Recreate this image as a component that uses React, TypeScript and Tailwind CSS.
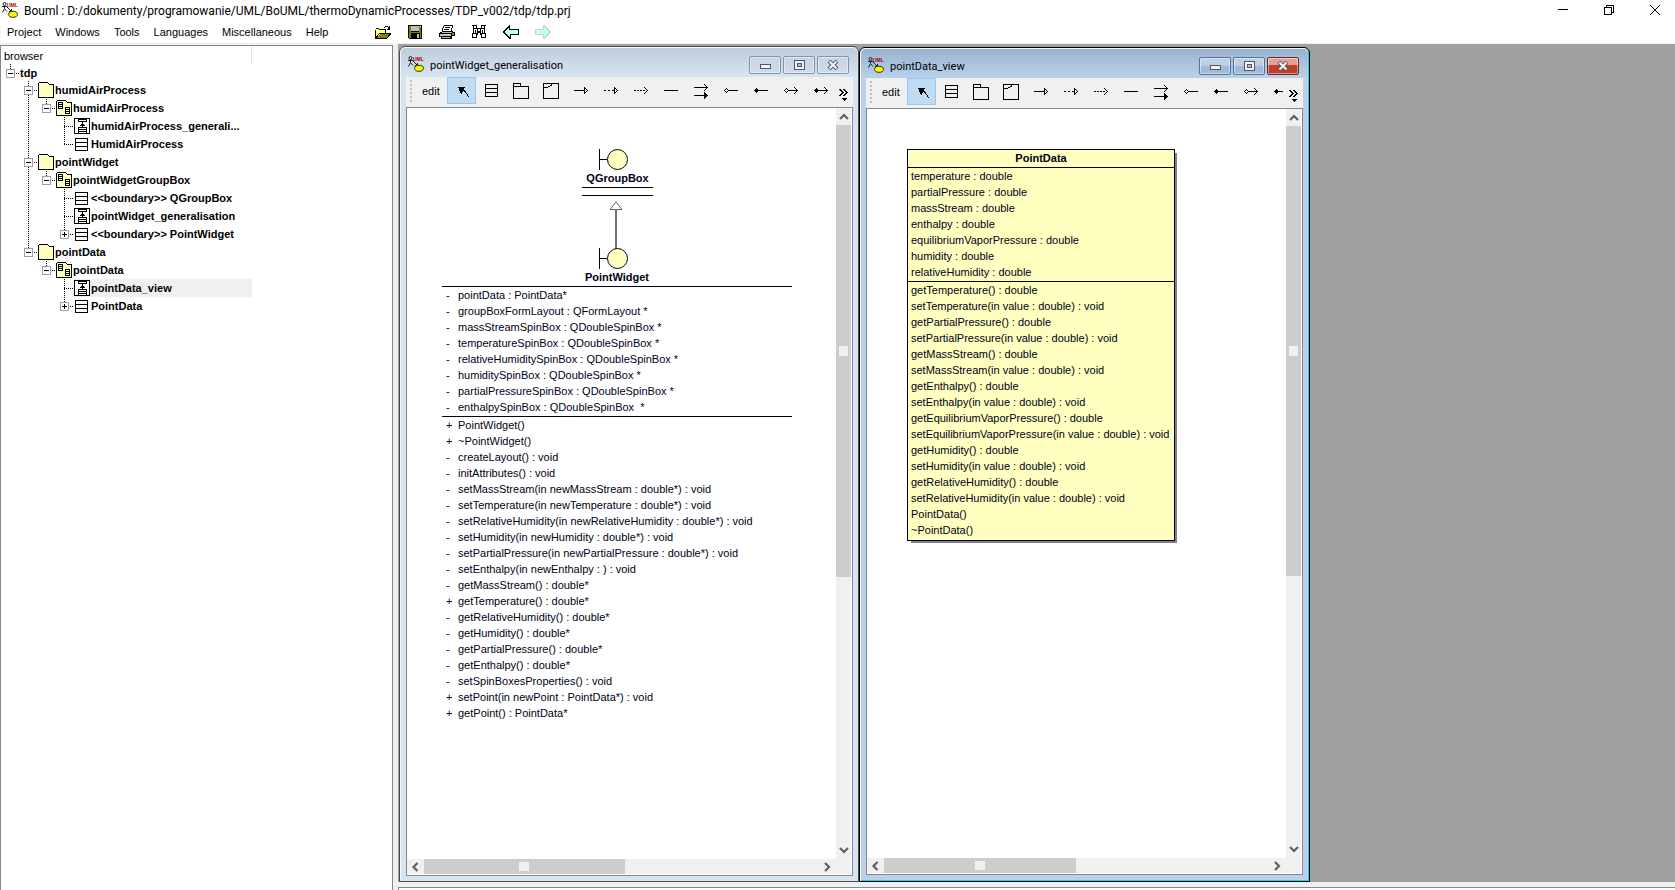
import React from "react";

const ui = "font-['Liberation_Sans',Arial,sans-serif]";

/* ---------- drawings ---------- */

function Svg({ w, h, children, smooth = false }: { w: number; h: number; children: React.ReactNode; smooth?: boolean }) {
  return (
    <svg
      width={w}
      height={h}
      viewBox={`0 0 ${w} ${h}`}
      fill="none"
      stroke="none"
      shapeRendering={smooth ? "auto" : "crispEdges"}
      className="block shrink-0"
      aria-hidden="true"
    >
      {children}
    </svg>
  );
}

function AppLogo() {
  return (
    <Svg w={16} h={16} smooth>
      <circle cx="2.5" cy="2" r="1.5" stroke="#222" />
      <path d="M0 4.5H5.5M2.5 3.5V6.5L0.5 10.5M2.5 6.5L5 9.5M5 5L9 9" stroke="#222" />
      <path d="M9.5 7V9.5H7" stroke="#222" />
      <text x="5" y="4.6" fontSize="5" fontWeight="700" fontFamily="Liberation Sans, sans-serif" fill="#a00000">UML</text>
      <ellipse cx="11" cy="12.3" rx="4.4" ry="3" fill="#ffff00" stroke="#333300" />
    </Svg>
  );
}

function OpenIcon() {
  return (
    <Svg w={16} h={14}>
      <path d="M0 5h1v-1h3v1h5v3h-4v1h-1v1h-1v1h-1v1h-1v1h-1z" fill="#ffff80" />
      <path d="M4 8.500H15.500M0.500 13V4.500M1 3.500H4M4 4.500H10.500V8M0 13.500H12" stroke="#000" />
      <path d="M5 9h10l-3 4H1z" fill="#808000" />
      <path d="M4 9l-3 4M15.500 9l-3.500 4" stroke="#000" />
      <path d="M9 2.500h1M10 1.500h3M13 2.500h1M14.500 1v3M12 4.500h3M13 3.500h2" stroke="#000" />
    </Svg>
  );
}

function SaveIcon() {
  return (
    <Svg w={14} h={14}>
      <path d="M0 0h14v14H1l-1-1z" fill="#000" />
      <path d="M1 1h12v12H1z" fill="#808000" />
      <path d="M3 0h8v7H3z" fill="#000" />
      <path d="M3 1h8v5H3z" fill="#c0c0c0" />
      <path d="M3 8h9v6H3z" fill="#000" />
      <path d="M9 9h2v4H9z" fill="#c0c0c0" />
      <path d="M12 1h1v1h-1z" fill="#fff" />
    </Svg>
  );
}

function PrintIcon() {
  return (
    <Svg w={16} h={14}>
      <path d="M5 0h9l-2 6H3z" fill="#fff" />
      <path d="M5 0.500h9M4.500 1v2M3.500 3v3M13.500 1v2M12.500 3v3M6 2.500h5M5 4.500h5" stroke="#000" />
      <path d="M1 7h2v-1h11v1h2v4h-3v3H2v-2H0V8z" fill="#000" />
      <path d="M3 7h10v1H3zM1 9h11v2H1zM3 12h8v1H3z" fill="#c0c0c0" />
      <path d="M8 9h3v1H8z" fill="#ffff00" />
      <path d="M13 8h2v2h-2z" fill="#808080" />
    </Svg>
  );
}

function FindIcon() {
  return (
    <Svg w={14} h={14}>
      <path d="M1.500 0.500H4.500V3.500H1.500ZM9.500 0.500H12.500V3.500H9.500Z" fill="#fff" stroke="#000" />
      <path d="M1.500 3.500H5.500V9.500H1.500ZM8.500 3.500H12.500V9.500H8.500Z" fill="#fff" stroke="#000" />
      <path d="M0.500 8.500H4.500V12.500H0.500ZM9.500 8.500H13.500V12.500H9.500Z" fill="#fff" stroke="#000" />
      <path d="M6 3h2v1H6zM6 6h2v2H6zM3 5h1v3H3zM10 5h1v3h-1zM0 0h2v1H0zM12 0h2v1h-2z" fill="#000" />
    </Svg>
  );
}

function BackIcon() {
  return (
    <Svg w={16} h={14}>
      <path d="M7 1v3h8v5H7v4L1 7z" fill="#c0ffff" />
      <path d="M7 0v4h9v6H8v4H6v-1H5v-1H4v-1H3v-1H2V9H1V8H0V6h1V5h1V4h1V3h1V2h1V1h1V0zM6 2v1H5v1H4v1H3v1H2v2h1v1h1v1h1v1h1v1h1V9h8V5H6z" fill="#000" fillRule="evenodd" />
    </Svg>
  );
}

function ForwardIcon() {
  return (
    <Svg w={16} h={14}>
      <path d="M9 0h1v1h1v1h1v1h1v1h1v1h1v1h1v2h-1v1h-1v1h-1v1h-1v1h-1v1h-1v1H8v-4H0V4h8V0z" fill="#c8d4d4" />
      <path d="M9 2h1v1h1v1h1v1h1v1h1v2h-1v1h-1v1h-1v1h-1v1H9V9H1V5h8z" fill="#c0ffff" />
    </Svg>
  );
}

function FolderIcon() {
  return (
    <Svg w={16} h={16}>
      <path d="M0.500 15.500V1.500L1.500 0.500H9.500L11.500 2.500H15.500V15.500Z" fill="#ffffc0" stroke="#000" />
    </Svg>
  );
}

function ViewIcon() {
  return (
    <Svg w={16} h={16}>
      <path d="M0.500 15.500V1.500L1.500 0.500H9.500L11.500 2.500H15.500V15.500Z" fill="#ffffc0" stroke="#000" />
      <path d="M2.500 2.500H6.500V8.500H2.500ZM2 4.500H7M2 6.500H7M9.500 7.500H13.500V13.500H9.500ZM9 9.500H14M9 11.500H14" stroke="#000" />
    </Svg>
  );
}

function DiagramIcon() {
  return (
    <Svg w={16} h={16}>
      <path d="M0.500 0.500H15.500V15.500H0.500Z" fill="#fff" stroke="#000" />
      <path d="M4.500 0.500V3.500H12.500V0.500M4 1.500H13M8.500 4V9M7 6.500H10M6 7.500H11M4.500 15V9.500H12.500V15M4 11.500H13M4 13.500H13" stroke="#000" />
    </Svg>
  );
}

function ClassIcon() {
  return (
    <Svg w={13} h={13}>
      <path d="M0.500 0.500H12.500V12.500H0.500ZM0 4.500H13M0 8.500H13" stroke="#000" />
    </Svg>
  );
}

const open = "M11 3.500h1M12 4.500h1M13 5.500h1M12 6.500h1M11 7.500h1M10 2.500h1M10 8.500h1";

const toolIcons: { label: string; icon: React.ReactNode }[] = [
  {
    label: "select",
    icon: (
      <Svg w={14} h={12}>
        <path d="M3 2.500h7M4 3.500h5M4 4.500h5M4 5.500h6M5 6.500h3M9 6.500h2M5 7.500h2M10 7.500h1M6 8.500h1M11 8.500h1M12 9.500h1M12 10.500h1M13 11.500h1" stroke="#000" />
      </Svg>
    ),
  },
  { label: "class", icon: <ClassIcon /> },
  {
    label: "package",
    icon: (
      <Svg w={16} h={16}>
        <path d="M0.500 15.500V0.500H7.500V3.500M0.500 3.500H15.500V15.500H0.500" stroke="#000" />
      </Svg>
    ),
  },
  {
    label: "fragment",
    icon: (
      <Svg w={16} h={16}>
        <path d="M0.500 0.500H15.500V15.500H0.500ZM0 4.500H5M5 3.500H7M7 2.500H9M8.500 0V2" stroke="#000" />
      </Svg>
    ),
  },
  {
    label: "generalisation",
    icon: (
      <Svg w={14} h={11}>
        <path d="M0 5.500H10M10.500 2V9M11 3.500h1M12 4.500h1M13 5.500h1M12 6.500h1M11 7.500h1" stroke="#000" />
      </Svg>
    ),
  },
  {
    label: "realization",
    icon: (
      <Svg w={14} h={11}>
        <path d="M0 5.500H2M4 5.500H6M8 5.500H10M10.500 2V9M11 3.500h1M12 4.500h1M13 5.500h1M12 6.500h1M11 7.500h1" stroke="#000" />
      </Svg>
    ),
  },
  {
    label: "dependency",
    icon: (
      <Svg w={14} h={11}>
        <path d={"M0 5.500H2M3 5.500H5M6 5.500H8M9 5.500H11" + open} stroke="#000" />
      </Svg>
    ),
  },
  {
    label: "association",
    icon: (
      <Svg w={14} h={11}>
        <path d="M0 5.500H14" stroke="#000" />
      </Svg>
    ),
  },
  {
    label: "directional association",
    icon: (
      <Svg w={14} h={16}>
        <path d="M0 4.500H14M11 2.500h1M12 3.500h1M12 5.500h1M11 6.500h1M10 1.500h1M10 7.500h1M0 12.500H12" stroke="#000" />
        <path d="M10 9h1v1h1v1h1v1h1v1h-1v1h-1v1h-1v1h-1z" fill="#000" />
      </Svg>
    ),
  },
  {
    label: "aggregation",
    icon: (
      <Svg w={14} h={11}>
        <path d="M4 5.500H14M0 5.500h1M1 4.500h1M2 3.500h1M3 4.500h1M1 6.500h1M2 7.500h1M3 6.500h1" stroke="#000" />
      </Svg>
    ),
  },
  {
    label: "composition",
    icon: (
      <Svg w={14} h={11}>
        <path d="M0 5.500H14M1 4.500h3M2 3.500h1M1 6.500h3M2 7.500h1" stroke="#000" />
      </Svg>
    ),
  },
  {
    label: "directional aggregation",
    icon: (
      <Svg w={14} h={11}>
        <path d={"M4 5.500H14M0 5.500h1M1 4.500h1M2 3.500h1M3 4.500h1M1 6.500h1M2 7.500h1M3 6.500h1" + open} stroke="#000" />
      </Svg>
    ),
  },
  {
    label: "directional composition",
    icon: (
      <Svg w={14} h={11}>
        <path d={"M0 5.500H14M1 4.500h3M2 3.500h1M1 6.500h3M2 7.500h1" + open} stroke="#000" />
      </Svg>
    ),
  },
];

/* ---------- header ---------- */

const menus = ["Project", "Windows", "Tools", "Languages", "Miscellaneous", "Help"];

const mainTools = [
  { label: "Open", icon: <OpenIcon /> },
  { label: "Save", icon: <SaveIcon /> },
  { label: "Print", icon: <PrintIcon /> },
  { label: "Search", icon: <FindIcon /> },
  { label: "Back", icon: <BackIcon /> },
  { label: "Forward", icon: <ForwardIcon /> },
];

function Header() {
  return (
    <header className="shrink-0 border-b border-[#f0f0f0] bg-white">
      <div className="flex h-5 items-center pl-0.5">
        <AppLogo />
        <h1 className="ml-1.5 flex-1 truncate pt-px font-['Roboto',sans-serif] text-[12px] leading-5 text-black">
          Bouml : D:/dokumenty/programowanie/UML/BoUML/thermoDynamicProcesses/TDP_v002/tdp/tdp.prj
        </h1>
        <div className="flex">
          <button aria-label="Minimize" className="flex h-5 w-[46px] items-center justify-center">
            <Svg w={10} h={10}><path d="M0 4.500H10" stroke="#000" /></Svg>
          </button>
          <button aria-label="Restore" className="flex h-5 w-[46px] items-center justify-center">
            <Svg w={10} h={10}><path d="M0.500 2.500H7.500V9.500H0.500ZM2.500 2V0.500H9.500V7.500H8" stroke="#000" /></Svg>
          </button>
          <button aria-label="Close" className="flex h-5 w-[43px] items-center justify-center pl-[3px]">
            <Svg w={10} h={10} smooth><path d="M0 0L10 10M10 0L0 10" stroke="#000" /></Svg>
          </button>
        </div>
      </div>
      <div className="flex h-[23px] items-center">
        <nav className="flex w-[367px] gap-3.5 pt-0.5 pl-[7px] text-[11px] text-black">
          {menus.map((m) => (
            <button key={m}>{m}</button>
          ))}
        </nav>
        <div className="flex">
          {mainTools.map((t) => (
            <button key={t.label} aria-label={t.label} className="flex w-8 items-center justify-center">
              {t.icon}
            </button>
          ))}
        </div>
      </div>
    </header>
  );
}

/* ---------- project browser ---------- */

type Kind = "folder" | "view" | "diagram" | "class";
type Node = { level: number; kind: Kind; text: string; box?: "-" | "+"; next?: boolean; outer?: boolean; selected?: boolean };

const nodes: Node[] = [
  { level: 1, kind: "folder", text: "humidAirProcess", box: "-", next: true },
  { level: 2, kind: "view", text: "humidAirProcess", box: "-", outer: true },
  { level: 3, kind: "diagram", text: "humidAirProcess_generali...", next: true, outer: true },
  { level: 3, kind: "class", text: "HumidAirProcess", outer: true },
  { level: 1, kind: "folder", text: "pointWidget", box: "-", next: true },
  { level: 2, kind: "view", text: "pointWidgetGroupBox", box: "-", outer: true },
  { level: 3, kind: "class", text: "<<boundary>> QGroupBox", next: true, outer: true },
  { level: 3, kind: "diagram", text: "pointWidget_generalisation", next: true, outer: true },
  { level: 3, kind: "class", text: "<<boundary>> PointWidget", box: "+", outer: true },
  { level: 1, kind: "folder", text: "pointData", box: "-" },
  { level: 2, kind: "view", text: "pointData", box: "-" },
  { level: 3, kind: "diagram", text: "pointData_view", next: true, selected: true },
  { level: 3, kind: "class", text: "PointData", box: "+" },
];

function Branch({ box, next }: { box?: "-" | "+"; next?: boolean }) {
  return (
    <Svg w={18} h={18}>
      <path d={next ? "M9.500 0V18" : "M9.500 0V9"} stroke="#000" strokeDasharray="1 1" />
      <path d="M9 9.500H18" stroke="#000" strokeDasharray="1 1" />
      {box && <path d="M5.500 5.500H13.500V13.500H5.500Z" fill="#fff" stroke="#a0a0a0" />}
      {box && <path d={box === "+" ? "M7 9.500H12M9.500 7V12" : "M7 9.500H12"} stroke="#000" />}
    </Svg>
  );
}

const kindIcon: Record<Kind, React.ReactNode> = {
  folder: <FolderIcon />,
  view: <ViewIcon />,
  diagram: <DiagramIcon />,
  class: <ClassIcon />,
};

function TreeRow({ node }: { node: Node }) {
  return (
    <li className="flex h-[18px] items-center">
      <span className="w-[18px] shrink-0" />
      {node.level > 1 && (
        <span className="w-[18px] shrink-0">
          {node.outer && (
            <Svg w={18} h={18}><path d="M9.500 0V18" stroke="#000" strokeDasharray="1 1" /></Svg>
          )}
        </span>
      )}
      {node.level > 2 && <span className="w-[18px] shrink-0" />}
      <Branch box={node.box} next={node.next} />
      <span className={`flex h-[18px] flex-1 items-center pl-px ${node.selected ? "bg-[#f0f0f0]" : ""}`}>
        <span className={`flex w-[17px] shrink-0 ${node.kind === "class" ? "pl-px" : ""}`}>{kindIcon[node.kind]}</span>
        <span className="whitespace-nowrap">{node.text}</span>
      </span>
    </li>
  );
}

function Browser() {
  return (
    <aside className="mt-px w-[393px] shrink-0 border border-b-0 border-[#828790] bg-white text-black">
      <div className="flex h-[18px] w-[251px] items-center border-r border-[#e5e5e5] pt-0.5 pl-[3px] text-[11px]">browser</div>
      <ul className="w-[251px] text-[11px] leading-[18px] font-bold">
        <li className="flex h-[17px] items-center">
          <Branch box="-" />
          <span className="pl-px">tdp</span>
        </li>
        {nodes.map((n, i) => (
          <TreeRow key={i} node={n} />
        ))}
      </ul>
    </aside>
  );
}

/* ---------- inner windows ---------- */

const chevrons = {
  up: "M4 10L8 6L12 10",
  down: "M4 5L8 9L12 5",
  left: "M9.500 4L5.500 8L9.500 12",
  right: "M6 4L10 8L6 12",
};

function ArrowButton({ dir }: { dir: keyof typeof chevrons }) {
  return (
    <button aria-label={`Scroll ${dir}`} className="flex size-[17px] shrink-0 items-center justify-center">
      <Svg w={16} h={16} smooth>
        <path d={chevrons[dir]} stroke="#606060" strokeWidth="2.200" />
      </Svg>
    </button>
  );
}

function Toolbar() {
  return (
    <div className="flex h-[30px] shrink-0 bg-[#f0f0f0]">
      <div className="flex w-4 shrink-0 flex-col gap-0.5 py-[3px] pl-1">
        {[0, 1, 2, 3, 4, 5].map((i) => (
          <span key={i} className="size-0.5 bg-[#c0c0c0]" />
        ))}
      </div>
      <span className="w-[25px] shrink-0 text-[11px] leading-7 text-black">edit</span>
      <div className="flex min-w-0 flex-1 overflow-hidden">
        {toolIcons.map((t, i) => (
          <button
            key={t.label}
            aria-label={t.label}
            className={`flex h-[27px] shrink-0 items-center justify-center ${
              i === 0 ? "w-[29px] border border-[#90c8f6] bg-[#c0dcf3]" : "w-[30px]"
            }`}
          >
            {t.icon}
          </button>
        ))}
      </div>
      <button aria-label="More tools" className="flex w-5 shrink-0 justify-center pt-3 pl-0.5">
        <Svg w={10} h={13}>
          <path d="M1 0.500h1M2 1.500h1M3 2.500h1M4 3.500h1M3 4.500h1M2 5.500h1M1 6.500h1M0 0.500h1M1 1.500h1M2 2.500h1M3 3.500h1M2 4.500h1M1 5.500h1M0 6.500h1M5 0.500h1M6 1.500h1M7 2.500h1M8 3.500h1M7 4.500h1M6 5.500h1M5 6.500h1M4 0.500h1M5 1.500h1M6 2.500h1M7 3.500h1M6 4.500h1M5 5.500h1M4 6.500h1M3 9.500h5M4 10.500h3M5 11.500h1" stroke="#000" />
        </Svg>
      </button>
    </div>
  );
}

function CaptionButtons({ active }: { active?: boolean }) {
  const base = "flex h-[18px] w-8 items-center justify-center rounded-[2px] border shadow-[inset_0_0_0_1px_rgba(255,255,255,0.45)]";
  const tone = active
    ? "border-[#5b7293] bg-linear-to-b from-[#bdd0e6] from-50% to-[#a0bbda] to-50%"
    : "border-[#8394b0] bg-linear-to-b from-[#c6d4e3] to-[#cfdcea]";
  const close = active
    ? "border-[#6b2a2a] bg-linear-to-b from-[#e3a093] from-45% to-[#bb4026] to-45%"
    : tone;
  return (
    <div className="flex gap-0.5 pt-0.5">
      <button aria-label="Minimize" className={`${base} ${tone}`}>
        <Svg w={12} h={10}><path d="M1.500 4.500H11.500V8.500H1.500Z" fill="#f4f4f4" stroke="#535666" /></Svg>
      </button>
      <button aria-label="Maximize" className={`${base} ${tone}`}>
        <Svg w={12} h={10}>
          <path d="M1.500 0.500H11.500V9.500H1.500Z" fill="#f4f4f4" stroke="#535666" />
          <path d="M4.500 3.500H8.500V6.500H4.500Z" fill="#a9bfd9" stroke="#535666" />
        </Svg>
      </button>
      <button aria-label="Close" className={`${base} ${active ? close : tone}`}>
        <Svg w={12} h={10} smooth>
          <path d="M2 1L10 9M10 1L2 9" stroke="#535666" strokeWidth="4" />
          <path d="M2.500 1.500L9.500 8.500M9.500 1.500L2.500 8.500" stroke="#f4f4f4" strokeWidth="2.200" />
        </Svg>
      </button>
    </div>
  );
}

function InnerWindow({
  title,
  active,
  place,
  thumb,
  children,
}: {
  title: string;
  active?: boolean;
  place: string;
  thumb: string;
  children: React.ReactNode;
}) {
  return (
    <section
      aria-label={title}
      className={`absolute flex flex-col rounded-t-[6px] border pl-1.5 ${place} ${
        active
          ? "border-black bg-[#b9d1ea] pr-1.5 pb-1.5 shadow-[inset_1px_1px_0_#f4f8fc,inset_-1px_-1px_0_#1fd0ee]"
          : "border-[#4c4c4c] bg-[#d7e4f2] pr-[5px] pb-[5px] shadow-[inset_1px_1px_0_#f4f8fc]"
      }`}
    >
      <div
        className={`-ml-[5px] mt-px flex h-[29px] shrink-0 items-center rounded-t-[5px] bg-linear-to-b pt-0.5 pl-[7px] ${
          active ? "-mr-[5px] from-[#99b4d1] to-[#b9d1ea] pr-[9px]" : "-mr-1 from-[#bfcddb] to-[#d7e4f2] pr-2"
        }`}
      >
        <AppLogo />
        <h2 className="ml-1.5 flex-1 truncate pt-1 font-['Roboto',sans-serif] text-[11px] leading-5 text-black">{title}</h2>
        <CaptionButtons active={active} />
      </div>
      <Toolbar />
      <div className="flex min-h-0 flex-1 flex-col border border-[#828790] bg-white">
        <div className="flex min-h-0 flex-1">
          <div className="relative min-w-0 flex-1 overflow-hidden bg-white text-[11px] leading-4 text-[#000018]">{children}</div>
          <div className="mr-px flex w-[15px] flex-col items-center bg-[#f0f0f0]">
            <ArrowButton dir="up" />
            <div className="min-h-0 w-full flex-1">
              <div className="flex h-[63%] w-full items-center justify-center bg-[#cdcdcd]">
                <span className="h-2.5 w-[9px] bg-[#f0f0f0]" />
              </div>
            </div>
            <ArrowButton dir="down" />
          </div>
        </div>
        <div className="mr-[17px] mb-px flex h-[15px] shrink-0 items-center bg-[#f0f0f0] shadow-[16px_0_0_#f0f0f0]">
          <ArrowButton dir="left" />
          <div className="h-full flex-1">
            <div className={`flex h-full items-center justify-center bg-[#cdcdcd] ${thumb}`}>
              <span className="h-[9px] w-2.5 bg-[#f0f0f0]" />
            </div>
          </div>
          <ArrowButton dir="right" />
        </div>
      </div>
    </section>
  );
}

/* ---------- diagrams ---------- */

const widgetAttributes = [
  "- pointData : PointData*",
  "- groupBoxFormLayout : QFormLayout *",
  "- massStreamSpinBox : QDoubleSpinBox *",
  "- temperatureSpinBox : QDoubleSpinBox *",
  "- relativeHumiditySpinBox : QDoubleSpinBox *",
  "- humiditySpinBox : QDoubleSpinBox *",
  "- partialPressureSpinBox : QDoubleSpinBox *",
  "- enthalpySpinBox : QDoubleSpinBox  *",
];

const widgetMethods = [
  "+ PointWidget()",
  "+ ~PointWidget()",
  "- createLayout() : void",
  "- initAttributes() : void",
  "- setMassStream(in newMassStream : double*) : void",
  "- setTemperature(in newTemperature : double*) : void",
  "- setRelativeHumidity(in newRelativeHumidity : double*) : void",
  "- setHumidity(in newHumidity : double*) : void",
  "- setPartialPressure(in newPartialPressure : double*) : void",
  "- setEnthalpy(in newEnthalpy : ) : void",
  "- getMassStream() : double*",
  "+ getTemperature() : double*",
  "- getRelativeHumidity() : double*",
  "- getHumidity() : double*",
  "- getPartialPressure() : double*",
  "- getEnthalpy() : double*",
  "- setSpinBoxesProperties() : void",
  "+ setPoint(in newPoint : PointData*) : void",
  "+ getPoint() : PointData*",
];

const dataAttributes = [
  "temperature : double",
  "partialPressure : double",
  "massStream : double",
  "enthalpy : double",
  "equilibriumVaporPressure : double",
  "humidity : double",
  "relativeHumidity : double",
];

const dataMethods = [
  "getTemperature() : double",
  "setTemperature(in value : double) : void",
  "getPartialPressure() : double",
  "setPartialPressure(in value : double) : void",
  "getMassStream() : double",
  "setMassStream(in value : double) : void",
  "getEnthalpy() : double",
  "setEnthalpy(in value : double) : void",
  "getEquilibriumVaporPressure() : double",
  "setEquilibriumVaporPressure(in value : double) : void",
  "getHumidity() : double",
  "setHumidity(in value : double) : void",
  "getRelativeHumidity() : double",
  "setRelativeHumidity(in value : double) : void",
  "PointData()",
  "~PointData()",
];

function Members({ items }: { items: string[] }) {
  return (
    <ul className="border-t border-[#000018] pb-px pl-1">
      {items.map((m) => (
        <li key={m} className="flex whitespace-pre">
          <span className="w-3 shrink-0">{m[0]}</span>
          <span>{m.slice(2)}</span>
        </li>
      ))}
    </ul>
  );
}

function BoundaryIcon() {
  return (
    <Svg w={37} h={21} smooth>
      <path d="M0.500 0V21M1 10.500H8" stroke="#000018" />
      <circle cx="18.500" cy="10.500" r="10" fill="#ffffc0" stroke="#000018" />
    </Svg>
  );
}

function GeneralisationDiagram() {
  return (
    <>
      <div className="absolute top-[41px] left-[175px] flex w-[71px] flex-col items-center">
        <BoundaryIcon />
        <h3 className="pb-px font-bold">QGroupBox</h3>
        <div className="h-[9px] w-full border-y border-[#000018]" />
      </div>
      <div className="absolute top-[93px] left-[202px]">
        <Svg w={14} h={48} smooth>
          <path d="M7 1L13 8.500H1Z" fill="#fff" stroke="#606068" />
          <path d="M7 8V48" stroke="#707078" strokeWidth="2" />
        </Svg>
      </div>
      <div className="absolute top-[140px] left-[35px] w-[350px]">
        <div className="flex flex-col items-center">
          <BoundaryIcon />
          <h3 className="pb-px font-bold">PointWidget</h3>
        </div>
        <Members items={widgetAttributes} />
        <Members items={widgetMethods} />
      </div>
    </>
  );
}

function PointDataDiagram() {
  return (
    <article className="absolute top-10 left-10 w-[268px] border border-[#000018] bg-[#ffffc0] shadow-[3px_3px_0_-1px_#808080]">
      <h3 className="h-[17px] text-center leading-[17px] font-bold">PointData</h3>
      <ul className="border-t border-[#000018] pb-px pl-[3px]">
        {dataAttributes.map((a) => (
          <li key={a}>{a}</li>
        ))}
      </ul>
      <ul className="border-t border-[#000018] pb-0.5 pl-[3px]">
        {dataMethods.map((m) => (
          <li key={m}>{m}</li>
        ))}
      </ul>
    </article>
  );
}

export default function App() {
  return (
    <div className={`flex h-screen flex-col overflow-hidden bg-[#f0f0f0] ${ui}`}>
      <Header />
      <div className="flex min-h-0 flex-1">
        <Browser />
        <main className="ml-[5px] flex min-w-0 flex-1 flex-col">
          <div className="relative min-h-0 flex-1 overflow-hidden bg-[#a0a0a0]">
            <InnerWindow title="pointWidget_generalisation" place="top-0.5 bottom-0 left-px w-[460px]" thumb="w-[51%]">
              <GeneralisationDiagram />
            </InnerWindow>
            <InnerWindow title="pointData_view" active place="top-[3px] bottom-0 left-[461px] w-[451px]" thumb="w-[50%]">
              <PointDataDiagram />
            </InnerWindow>
          </div>
          <div className="mt-[5px] h-[3px] shrink-0 border-t border-l border-[#828790] bg-white" />
        </main>
      </div>
    </div>
  );
}
